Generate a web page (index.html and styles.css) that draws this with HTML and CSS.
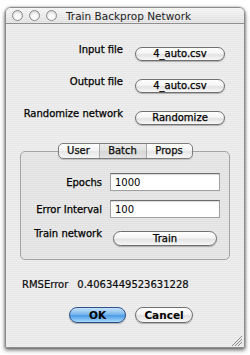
FILE: index.html
```html
<!DOCTYPE html>
<html lang="en">
<head>
  <meta charset="utf-8">
  <title>Train Backprop Network</title>
  <link rel="stylesheet" href="styles.css">
</head>
<body>
  <div class="window">
    <div class="titlebar">
      <span class="lights"><i></i><i></i><i></i></span>
      <span class="title">Train Backprop Network</span>
    </div>

    <div class="content">
      <div class="rows">
        <div class="row">
          <span class="label">Input file</span>
          <button class="btn">4_auto.csv</button>
        </div>
        <div class="row">
          <span class="label">Output file</span>
          <button class="btn">4_auto.csv</button>
        </div>
        <div class="row">
          <span class="label">Randomize network</span>
          <button class="btn">Randomize</button>
        </div>
      </div>

      <div class="tabs">
        <span class="tab tab-user">User</span>
        <span class="tab tab-batch selected">Batch</span>
        <span class="tab tab-props">Props</span>
      </div>

      <div class="group">
        <div class="field-row">
          <span class="label">Epochs</span>
          <input class="field" type="text" value="1000">
        </div>
        <div class="field-row">
          <span class="label">Error Interval</span>
          <input class="field" type="text" value="100">
        </div>
        <div class="row train-row">
          <span class="label">Train network</span>
          <button class="btn train">Train</button>
        </div>
      </div>

      <div class="status">
        <span>RMSError</span>
        <span>0.4063449523631228</span>
      </div>

      <div class="actions">
        <button class="btn default ok">OK</button>
        <button class="btn cancel">Cancel</button>
      </div>

      <span class="grip"></span>
    </div>
  </div>
</body>
</html>
```

FILE: styles.css
```css
:root {
  --stripe-a: #eeeeee;
  --stripe-b: #e7e7e7;
  --edge: #8c8c8c;
  --text: #111;
  --font: 'DejaVu Sans', sans-serif;
}
* { box-sizing: border-box; margin: 0; padding: 0; }
body {
  background: #fff;
  padding: 7px 5px;
  font-family: var(--font);
  font-size: 10px;
  color: var(--text);
}

/* window frame */
.window {
  position: relative;
  width: 240px;
  height: 341px;
  border: 1px solid var(--edge);
  border-radius: 6px 6px 0 0;
  background: repeating-linear-gradient(var(--stripe-a) 0 1px, var(--stripe-b) 1px 2px);
  box-shadow: 0 2px 4px rgba(0,0,0,.6), 0 0 2px rgba(0,0,0,.35);
}
.titlebar {
  height: 16px;
  display: flex;
  align-items: center;
  padding-left: 6px;
  border-bottom: 1px solid #8e8e8e;
  border-radius: 5px 5px 0 0;
  background:
    repeating-linear-gradient(rgba(255,255,255,.35) 0 1px, transparent 1px 2px),
    linear-gradient(#f2f2f2, #dcdcdc);
}
.lights {
  display: flex;
  gap: 6px;
}
.lights i {
  width: 11px;
  height: 11px;
  border-radius: 50%;
  border: 1px solid #8a8a8a;
  background: radial-gradient(circle at 50% 65%, #fbfbfb 0 35%, #cdcdcd 90%);
}
.title {
  margin-left: 9px;
  font-size: 10.5px;
  color: #222;
}

.content {
  padding-top: 19px;
}
.label {
  text-align: right;
  white-space: nowrap;
  color: #000;
  -webkit-text-stroke: .25px #000;
}

/* top rows */
.rows {
  display: grid;
  grid-template-columns: 117px 90px;
  column-gap: 12px;
  row-gap: 14px;
}
.row {
  display: contents;
}
.row .label {
  line-height: 14px;
}
.row .btn {
  margin-top: 4px;
}

/* aqua push button */
.btn {
  height: 14px;
  font-family: var(--font);
  font-size: 10px;
  color: #000;
  -webkit-text-stroke: .25px #000;
  border: 1px solid #6f6f6f;
  border-radius: 8px;
  background: linear-gradient(#ffffff, #f4f4f4 45%, #e3e3e3 55%, #f7f7f7);
  box-shadow: 0 1px 1px rgba(0,0,0,.25);
  line-height: 12px;
}
.btn.default {
  border-color: #2f4f86;
  background: linear-gradient(#c6e3fb, #7ab8ee 45%, #4d99e6 55%, #a7dbfb);
}

/* tab control */
.tabs {
  position: relative;
  z-index: 1;
  display: flex;
  width: 135px;
  height: 16px;
  margin: 18px auto 0;
  border: 1px solid #7d7d7d;
  border-radius: 5px;
  overflow: hidden;
  background: linear-gradient(#ffffff, #f3f3f3 50%, #e6e6e6 51%, #f6f6f6);
  box-shadow: 0 1px 1px rgba(0,0,0,.15);
}
.tab {
  text-align: center;
  line-height: 14px;
  -webkit-text-stroke: .25px #000;
}
.tab + .tab { border-left: 1px solid #a8a8a8; }
.tab-user { width: 40px; }
.tab-batch { width: 47px; }
.tab-props { flex: 1; }
.tab.selected {
  background: linear-gradient(#ececec, #e0e0e0 50%, #d6d6d6 51%, #e4e4e4);
}

.group {
  margin: -8px 14px 0;
  padding: 21px 10px 13px 0;
  border: 1px solid #a3a3a3;
  border-radius: 5px;
  background: rgba(0,0,0,.025);
  display: grid;
  grid-template-columns: 81px 110px;
  column-gap: 8px;
  row-gap: 9px;
}
.field-row {
  display: contents;
}
.field-row .label {
  align-self: center;
}
.field {
  height: 18px;
  width: 110px;
  padding: 0 4px;
  font-family: var(--font);
  font-size: 10px;
  color: #000;
  border: 1px solid #a0a0a0;
  border-top-color: #6c6c6c;
  background: #fff;
  box-shadow: inset 0 1px 1px rgba(0,0,0,.15);
  outline: none;
}
.train-row .btn {
  width: 104px;
  height: 15px;
  margin-left: 3px;
}

.status {
  display: flex;
  gap: 9px;
  margin-top: 19px;
  padding-left: 16px;
  line-height: 12px;
  -webkit-text-stroke: .2px #000;
}

.actions {
  display: flex;
  gap: 9px;
  margin-top: 16px;
  padding-left: 63px;
}
.actions .btn {
  height: 16px;
  font-size: 10.5px;
  font-weight: bold;
  -webkit-text-stroke: 0;
  line-height: 14px;
}
.ok { width: 57px; }
.cancel { width: 58px; }

/* resize grip sits over the corner */
.grip {
  position: absolute;
  right: 2px;
  bottom: 1px;
  width: 10px;
  height: 10px;
  background: linear-gradient(135deg,
    transparent 0 45%, #8a8a8a 45% 50%, transparent 50% 62%,
    #8a8a8a 62% 67%, transparent 67% 79%, #8a8a8a 79% 84%, transparent 84%);
}
```
